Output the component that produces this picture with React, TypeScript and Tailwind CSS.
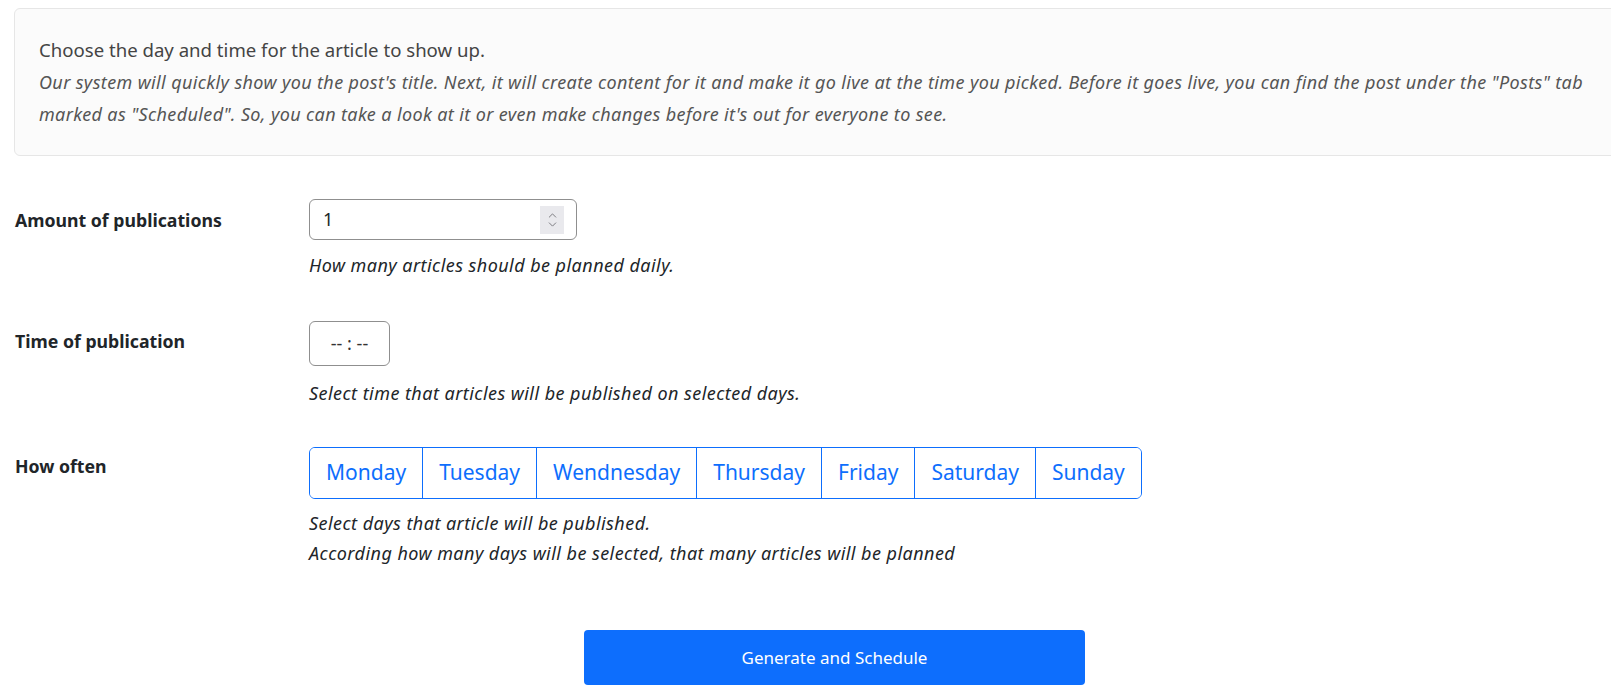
import { ChevronUp, ChevronDown } from 'lucide-react';

const days = ['Monday', 'Tuesday', 'Wendnesday', 'Thursday', 'Friday', 'Saturday', 'Sunday'];

export default function App() {
  return (
    <div className="w-[1611px] h-[700px] overflow-hidden bg-white text-[#212529]" style={{ fontFamily: '"Noto Sans", sans-serif' }}>
      <div className="pl-[14px] pt-[8px]">
        {/* Info panel */}
        <div className="w-[1640px] h-[148px] bg-[#fbfbfb] border border-[#e6e6e6] rounded-md pl-[24px] pt-[27px]">
          <h5 className="text-[18.6px] text-[#444] leading-[28px]">Choose the day and time for the article to show up.</h5>
          <p className="text-[18px] italic text-[#555] leading-[32px] mt-[2px] w-[1560px] tracking-[0.37px]">
            Our system will quickly show you the post's title. Next, it will create content for it and make it go live at the time you picked. Before it goes live, you can find the post under the "Posts" tab marked as "Scheduled". So, you can take a look at it or even make changes before it's out for everyone to see.
          </p>
        </div>
      </div>

      <div className="pl-[15px] pt-[43px]">
        {/* Amount */}
        <div className="flex">
          <label className="w-[294px] font-bold text-[17.7px] leading-[27px] pt-[8px]">Amount of publications</label>
          <div>
            <div className="w-[268px] h-[41px] border border-[#8f8f8f] rounded-md flex items-center pl-[13px] pr-[12px]">
              <span className="flex-1 text-[18px]">1</span>
              <div className="w-[24px] h-[28px] bg-[#e9e9ed] flex flex-col items-center justify-center text-[#77777c]">
                <ChevronUp className="w-[13px] h-[13px] -mb-[2px]" strokeWidth={1.75} />
                <ChevronDown className="w-[13px] h-[13px] -mt-[2px]" strokeWidth={1.75} />
              </div>
            </div>
            <p className="italic text-[18px] mt-[12px] leading-[27px] tracking-[0.45px]">How many articles should be planned daily.</p>
          </div>
        </div>

        {/* Time */}
        <div className="flex mt-[42px]">
          <label className="w-[294px] font-bold text-[17.7px] leading-[27px] pt-[7px]">Time of publication</label>
          <div>
            <div className="w-[81px] h-[45px] border border-[#8f8f8f] rounded-md flex items-center justify-center text-[18px] text-[#333]">
              -- : --
            </div>
            <p className="italic text-[18px] mt-[14px] leading-[27px] tracking-[0.45px]">Select time that articles will be published on selected days.</p>
          </div>
        </div>

        {/* Days */}
        <div className="flex mt-[40px]">
          <label className="w-[294px] font-bold text-[17.7px] leading-[27px] pt-[6px]">How often</label>
          <div>
            <div className="inline-flex border border-[#0d6efd] rounded-md overflow-hidden">
              {days.map((d, i) => (
                <button
                  key={d}
                  className={`h-[50px] px-[16px] text-[21px] text-[#0d6efd] bg-white ${i > 0 ? 'border-l border-[#0d6efd]' : ''}`}
                >
                  {d}
                </button>
              ))}
            </div>
            <p className="italic text-[18px] mt-[9px] leading-[30px] tracking-[0.45px]">
              Select days that article will be published.
              <br />
              According how many days will be selected, that many articles will be planned
            </p>
          </div>
        </div>

        {/* Submit */}
        <div className="mt-[62px] pl-[569px]">
          <button className="w-[501px] h-[55px] bg-[#0d6efd] text-white text-[17px] rounded-[4px]">
            Generate and Schedule
          </button>
        </div>
      </div>
    </div>
  );
}
